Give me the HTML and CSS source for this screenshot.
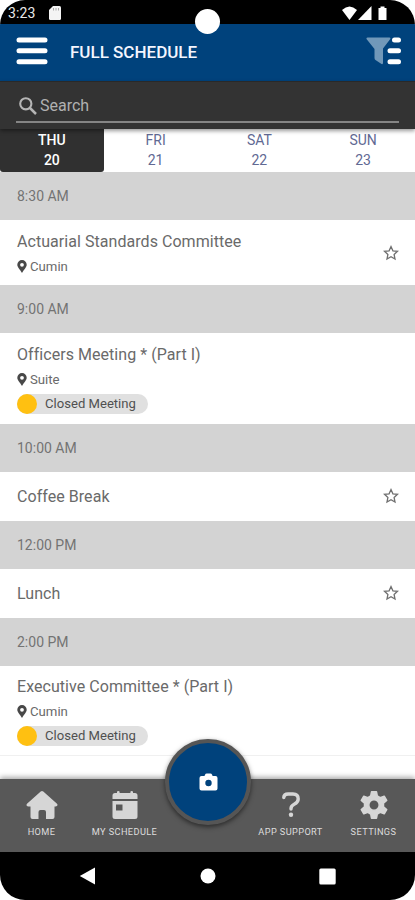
FILE: index.html
```html
<!DOCTYPE html>
<html lang="en">
<head>
<meta charset="utf-8">
<title>Full Schedule</title>
<link rel="stylesheet" href="styles.css">
</head>
<body>
<svg class="defs" width="0" height="0">
  <symbol id="pin" viewBox="0 0 10 13"><path fill-rule="evenodd" d="M5 0a4.700 4.700 0 0 0-4.700 4.800C.3 7.300 3 9.500 5 13c2-3.500 4.700-5.700 4.700-8.200A4.700 4.700 0 0 0 5 0zm0 2.900a1.900 1.900 0 1 1 0 3.800 1.900 1.900 0 0 1 0-3.800z"/></symbol>
  <symbol id="star" viewBox="0 0 16 16"><path d="M8 1.600l1.900 4.200 4.600.5-3.400 3.100.9 4.700L8 11.800l-4 2.300.9-4.700-3.400-3.100 4.600-.5z"/></symbol>
</svg>
<div class="phone">
  <div class="status">
    <span class="clock">3:23</span>
    <svg class="sd" width="12" height="14" viewBox="0 0 12 14"><path d="M4 0h6.500Q12 0 12 1.500v11q0 1.500-1.500 1.500h-9Q0 14 0 12.500V4z" fill="#f4f4f4"/><path d="M4.500 2v2.500M7 2v2.500M9.500 2v2.500" stroke="#aaa"/></svg>
    <svg class="signals" width="46" height="15" viewBox="0 0 46 15" fill="#fff"><path d="M0 4Q7.500-3 15 4L7.500 14z"/><path d="M29.500 0v14H16z"/><path d="M36.500 2h2V0.500h4V2h2v12h-8z"/></svg>
    <span class="camera-hole"></span>
  </div>
  <header class="header">
    <svg width="32" height="28" viewBox="0 0 32 28" stroke="#fff" stroke-width="5" stroke-linecap="round"><path d="M3 3h26M3 13.800h26M3 24.800h26"/></svg>
    <h1>FULL SCHEDULE</h1>
    <svg class="filter" width="36" height="28" viewBox="0 0 36 28"><path d="M1.500 0.500h22q1.500 0 .8 1.500L17 11.500V26q0 1.500-1.500 1L9.500 23q-1-.7-1-2v-9L.5 2Q0 .5 1.500.5z" fill="#7198b9"/><path d="M28.500 3h4M24 13.800h8.500M24 24.800h8.500" stroke="#fff" stroke-width="5" stroke-linecap="round"/></svg>
  </header>
  <div class="search">
    <div class="field">
      <svg width="18" height="18" viewBox="0 0 18 18" fill="none" stroke="#b5b5b5" stroke-width="2.100"><circle cx="6.800" cy="6.800" r="5.600"/><path d="M11 11l6 6" stroke-width="2.500"/></svg>
      <span>Search</span>
    </div>
  </div>
  <nav class="days">
    <div class="day active"><span>THU</span><span>20</span></div>
    <div class="day"><span>FRI</span><span>21</span></div>
    <div class="day"><span>SAT</span><span>22</span></div>
    <div class="day"><span>SUN</span><span>23</span></div>
  </nav>
  <main class="list">
    <div class="time">8:30 AM</div>
    <div class="item h65"><div class="info"><div class="title">Actuarial Standards Committee</div><div class="place"><svg width="10" height="13"><use href="#pin"/></svg>Cumin</div></div><svg class="star" width="16" height="16"><use href="#star"/></svg></div>
    <div class="time">9:00 AM</div>
    <div class="item h91"><div class="info"><div class="title">Officers Meeting * (Part I)</div><div class="place"><svg width="10" height="13"><use href="#pin"/></svg>Suite</div><div class="tag"><i></i>Closed Meeting</div></div></div>
    <div class="time">10:00 AM</div>
    <div class="item h49"><div class="info"><div class="title">Coffee Break</div></div><svg class="star" width="16" height="16"><use href="#star"/></svg></div>
    <div class="time">12:00 PM</div>
    <div class="item h49"><div class="info"><div class="title">Lunch</div></div><svg class="star" width="16" height="16"><use href="#star"/></svg></div>
    <div class="time">2:00 PM</div>
    <div class="item h90"><div class="info"><div class="title">Executive Committee * (Part I)</div><div class="place"><svg width="10" height="13"><use href="#pin"/></svg>Cumin</div><div class="tag"><i></i>Closed Meeting</div></div></div>
  </main>
  <nav class="tabs">
    <div class="tab"><svg width="32" height="30" viewBox="0 0 32 30" fill="#d6d6d6"><path d="M14.700 1.500q1.300-1.200 2.600 0L31 13.700q1 1.100.2 2.100-.6.700-1.800.7H28.500V27q0 2-2 2H20v-7q0-2-2-2h-3.500q-2 0-2 2v7H6.500q-2 0-2-2V16.500H2.500q-1.300 0-1.800-.8-.6-1 .3-2z"/></svg><span>HOME</span></div>
    <div class="tab"><svg width="26" height="30" viewBox="0 0 26 30" fill="#d6d6d6"><path d="M5 3V2q0-1 1.300-1t1.300 1v1h10.800V2q0-1 1.300-1t1.300 1v1H23q2.500 0 2.500 2.500V9H.5V5.500Q.5 3 3 3z"/><path fill-rule="evenodd" d="M.5 11h25v15.500Q25.500 29 23 29H3Q.5 29 .5 26.500zM4 14.500v6h6.500v-6z"/></svg><span>MY SCHEDULE</span></div>
    <div class="tab"></div>
    <div class="tab"><svg width="20" height="30" viewBox="0 0 20 30" fill="none" stroke="#d6d6d6"><path d="M2.800 7.500Q2.800 4 7 4h5q5.200 0 5.200 5 0 3.300-4 5.200-3.200 1.600-3.200 4.300v.5" stroke-width="3.400" stroke-linecap="round"/><circle cx="10" cy="24.800" r="2.200" fill="#d6d6d6" stroke="none"/></svg><span>APP SUPPORT</span></div>
    <div class="tab"><svg width="28" height="30" viewBox="0 0 28 30"><path fill="#d6d6d6" stroke="#d6d6d6" stroke-width="1.500" stroke-linejoin="round" fill-rule="evenodd" d="M11.500 1.800h5l.8 4.200 2.900 1.700 4-1.500 2.500 4.300-3.200 2.800v3.400l3.200 2.800-2.500 4.300-4-1.500-2.900 1.700-.8 4.200h-5l-.8-4.200-2.900-1.700-4 1.500-2.500-4.300 3.200-2.800v-3.400L1.300 10.500l2.500-4.300 4 1.500L10.700 6zM14 9.800a5.200 5.200 0 1 0 0 10.400 5.200 5.200 0 0 0 0-10.400z"/></svg><span>SETTINGS</span></div>
    <div class="fab"><svg width="19" height="18" viewBox="0 0 19 18"><path fill-rule="evenodd" d="M6 1.800Q6.500.5 7.800.5h3.500q1.300 0 1.800 1.300l.5 1.200H16.500Q18.500 3 18.500 5v10.500q0 2-2 2h-14q-2 0-2-2V5q0-2 2-2h3zM9.500 6.800a3.200 3.200 0 1 0 0 6.400 3.200 3.200 0 0 0 0-6.400z" fill="#fff"/></svg></div>
  </nav>
  <div class="system">
    <svg width="17" height="18"><path d="M16 .5v17L.8 9z" fill="#fff"/></svg>
    <svg width="16" height="16"><circle cx="8" cy="8" r="7.500" fill="#fff"/></svg>
    <svg width="17" height="17"><rect x=".3" y=".5" width="16.400" height="16" rx="1.500" fill="#fff"/></svg>
  </div>
</div>
</body>
</html>
```
FILE: styles.css
```css
* { box-sizing: border-box; }
body { margin: 0; background: #fff; font-family: Roboto, sans-serif; }
.defs { position: absolute; }
svg { flex: none; display: block; }
.phone { width: 415px; height: 900px; display: flex; flex-direction: column; border-radius: 25px; overflow: hidden; background: #fff; }
.status { height: 24px; flex: none; background: #000; position: relative; z-index: 3; display: flex; align-items: flex-start; padding: 6px 27px 0 8px; color: #e8e8e8; }
.clock { font-size: 14px; line-height: 15px; letter-spacing: .1px; width: 41px; }
.signals { margin-left: auto; }
.camera-hole { position: absolute; left: 195px; top: 9px; width: 25px; height: 25px; border-radius: 50%; background: #fff; }
.header { height: 57px; flex: none; background: #00427c; display: flex; align-items: center; padding: 0 13px 3px 16px; }
.header h1 { margin: 2px 0 0 22px; font-size: 17px; font-weight: 500; line-height: 24px; color: #f4f6ff; }
.filter { margin-left: auto; }
.search { height: 48px; flex: none; background: #333; padding: 8px 16px 0; border-top: 1px solid #292929; box-shadow: 0 2px 4px #0006; position: relative; z-index: 2; }
.field { height: 33px; border-bottom: 2px solid #858585; display: flex; align-items: center; gap: 3px; padding-left: 3px; color: #b0b0b0; font-size: 16px; }
.days { height: 43px; flex: none; display: grid; grid-template-columns: repeat(4, 1fr); position: relative; }
.day { display: flex; flex-direction: column; align-items: center; font-size: 14px; line-height: 20px; color: #616993; padding-top: 1px; }
.day.active { background: #303030; color: #fff; font-weight: 500; border-radius: 0 0 3px 3px; }
.list { flex: 1; min-height: 0; }
.time { height: 48px; background: #d3d3d3; padding-left: 17px; line-height: 48px; font-size: 14px; color: #737373; }
.item { display: flex; align-items: center; padding: 0 16px 0 17px; color: #6a6a6a; }
.info { flex: 1; }
.h65 { height: 65px; }
.h91 { height: 91px; }
.h49 { height: 49px; }
.h90 { height: 90px; border-bottom: 1px solid #f0f0f0; }
.title { font-size: 16px; line-height: 24px; letter-spacing: .05px; }
.place { display: flex; align-items: center; gap: 3px; font-size: 13.200px; line-height: 18px; margin-top: 4px; }
.place svg { fill: #484848; }
.tag { width: 131px; height: 20px; margin-top: 5px; border-radius: 10px; background: #e0e0e0; display: flex; align-items: center; gap: 8px; font-size: 13.100px; color: #505050; }
.h91 .info, .h90 .info { padding-bottom: 1px; }
.tag i { width: 20px; height: 20px; border-radius: 50%; background: #ffc011; }
.star { fill: none; stroke: #707070; stroke-width: 1.300; }
.h49 .star { margin-bottom: 1px; }
.tabs { height: 73px; flex: none; background: #585858; display: grid; grid-template-columns: repeat(5, 83px); position: relative; box-shadow: 0 -2px 5px #0005; }
.tab { display: flex; flex-direction: column; align-items: center; padding-top: 11px; font-size: 9.200px; line-height: 12px; letter-spacing: .4px; color: #ddd; }
.tab span { margin-top: 6px; white-space: nowrap; }
.fab { position: absolute; left: 165px; top: -40px; width: 86px; height: 86px; border-radius: 50%; background: #00427c; border: 4px solid #555; box-shadow: 0 2px 5px #0008; display: grid; place-items: center; }
.system { height: 48px; flex: none; background: #000; display: flex; align-items: center; justify-content: space-between; padding: 0 79px; }
```
